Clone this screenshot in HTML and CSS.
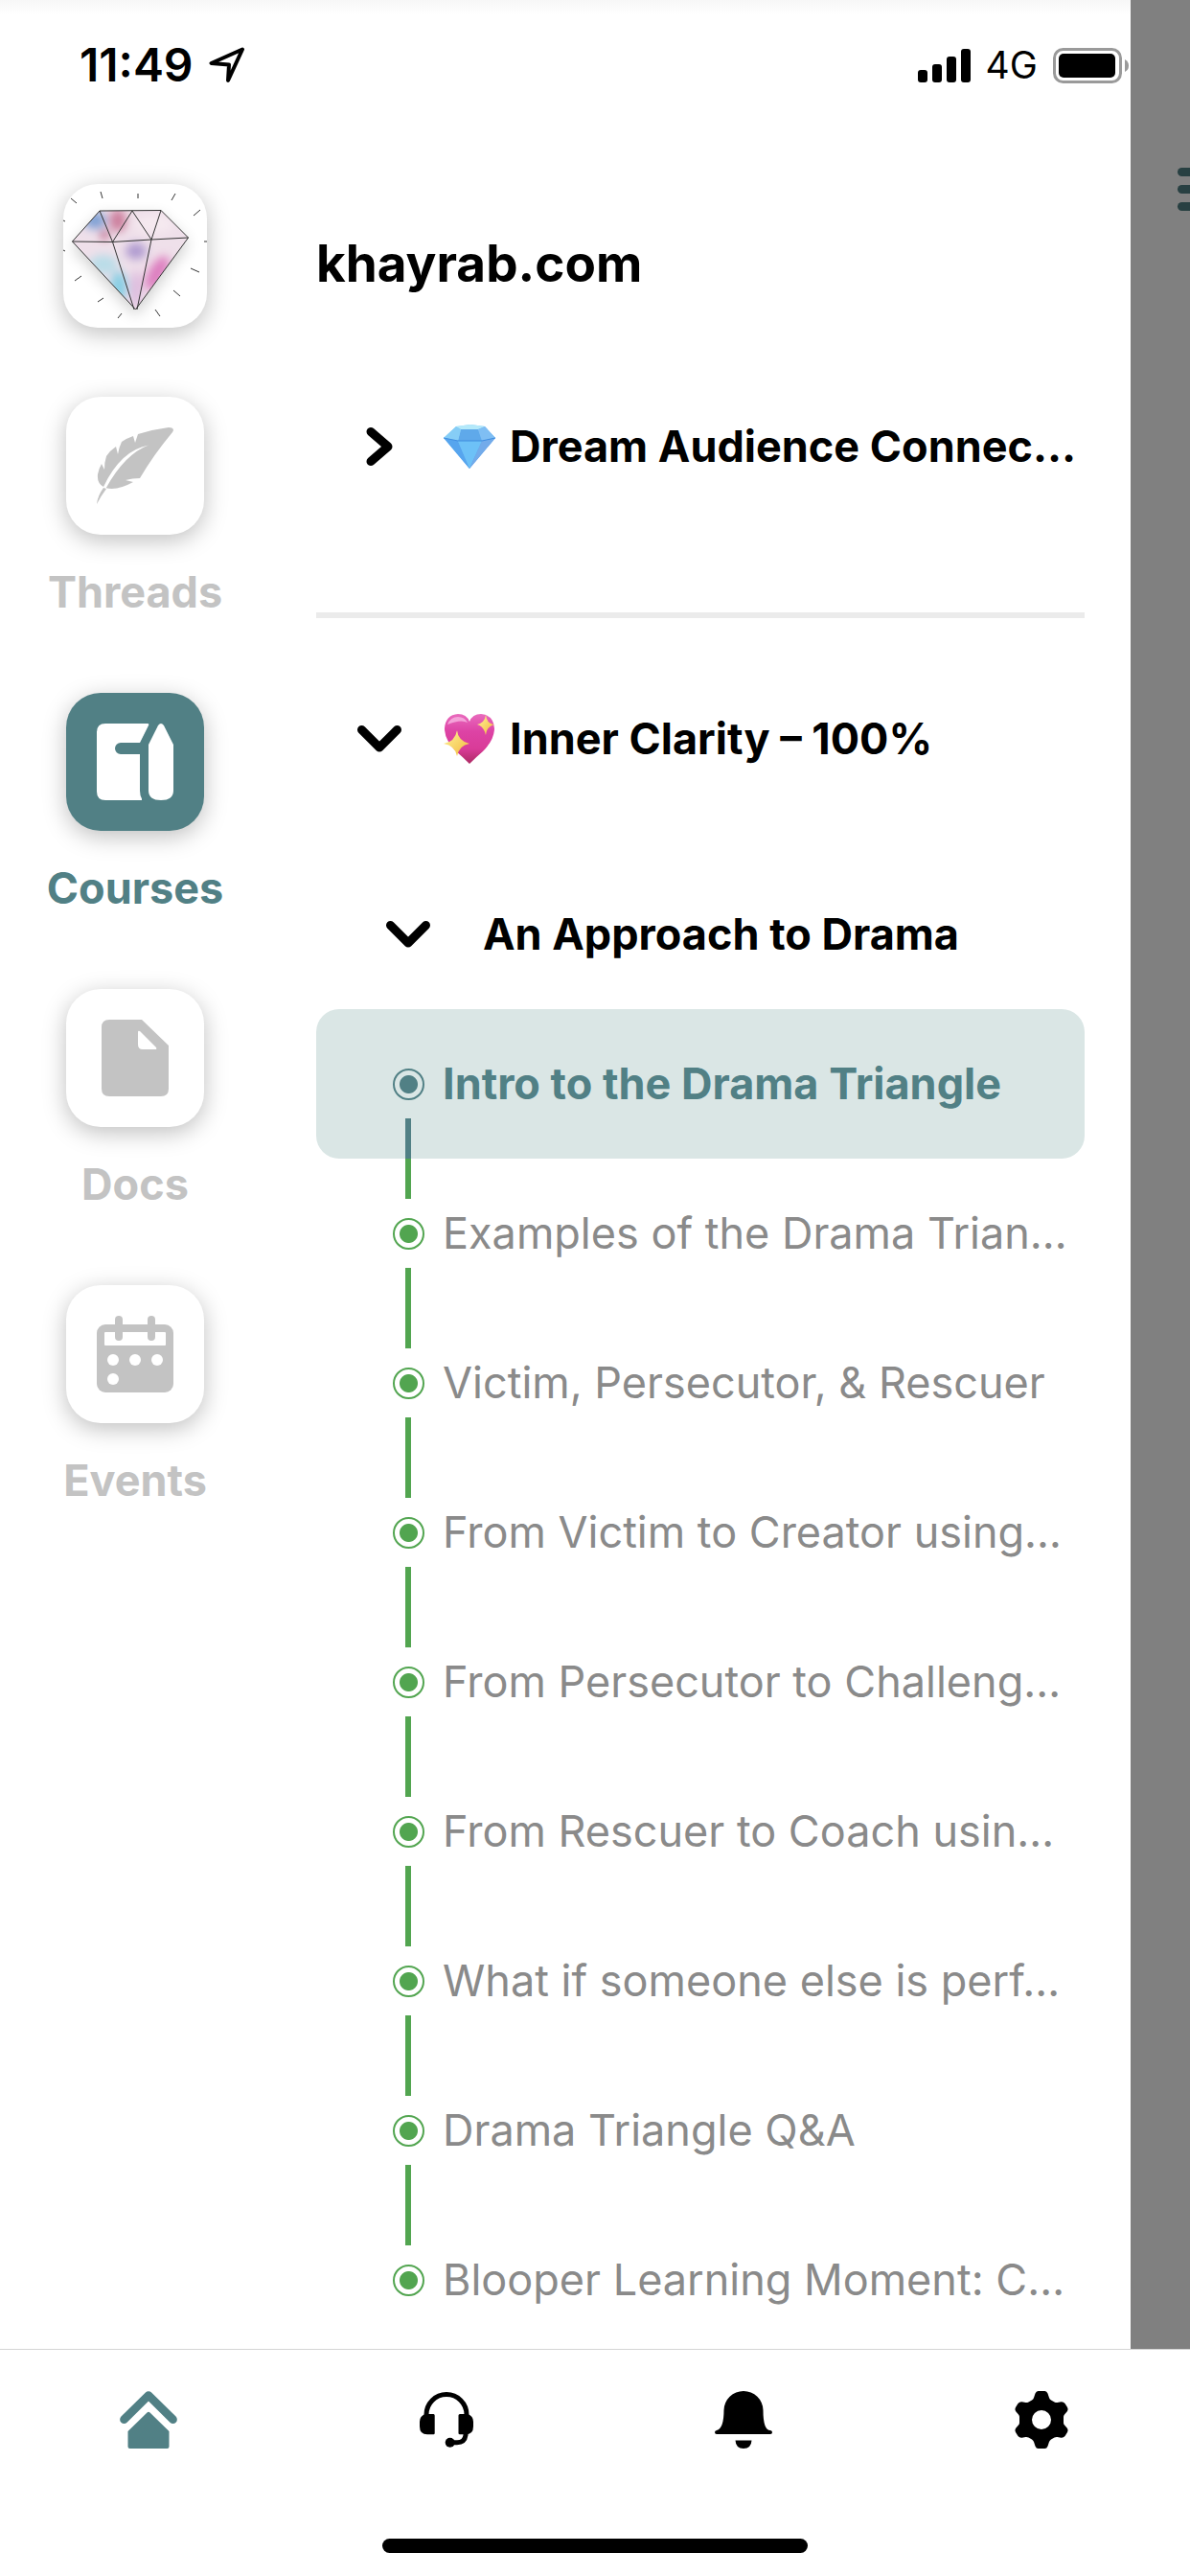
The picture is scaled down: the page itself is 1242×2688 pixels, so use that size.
FILE: index.html
```html
<!DOCTYPE html>
<html lang="en">
<head>
    <meta charset="UTF-8">
    <meta name="viewport" content="width=device-width, initial-scale=1.0">
    <title>khayrab.com</title>
    <link rel="stylesheet" href="styles.css">
</head>
<body>
    <div class="screen">
        <div class="drawer">
            <header class="status-bar">
                <div class="status-left">
                    <span class="time">11:49</span>
                    <svg width="38" height="38" viewBox="0 0 38 38" aria-hidden="true">
                        <path d="M35 2.500 2.500 17 21 18.500 20 35Z" fill="none" stroke="#000" stroke-width="4" stroke-linejoin="round"/>
                    </svg>
                </div>
                <div class="status-right">
                    <svg width="55" height="35" viewBox="0 0 55 35" aria-hidden="true">
                        <rect x="0" y="22" width="10" height="13" rx="3"/>
                        <rect x="15" y="16" width="10" height="19" rx="3"/>
                        <rect x="30" y="8" width="10" height="27" rx="3"/>
                        <rect x="45" y="0" width="10" height="35" rx="3"/>
                    </svg>
                    <span class="network">4G</span>
                    <svg width="79" height="37" viewBox="0 0 79 37" aria-hidden="true">
                        <rect x="1.500" y="1.500" width="69" height="34" rx="9" fill="none" stroke="#9a9a9a" stroke-width="3"/>
                        <rect x="6" y="6" width="59" height="25" rx="5"/>
                        <path d="M75 12Q79 14 79 18.500T75 25Z" fill="#9a9a9a"/>
                    </svg>
                </div>
            </header>

            <div class="panels">
                <nav class="sidebar" aria-label="Spaces">
                    <a class="logo" href="#" aria-label="khayrab.com">
                        <svg width="150" height="150" viewBox="0 0 150 150" aria-hidden="true">
                            <defs>
                                <clipPath id="gem"><path d="M38 28 102 27.500 130.500 56 75.500 131 9.500 60Z"/></clipPath>
                                <filter id="soft" x="-50%" y="-50%" width="200%" height="200%"><feGaussianBlur stdDeviation="5"/></filter>
                                <filter id="glow" x="-50%" y="-50%" width="200%" height="200%"><feGaussianBlur stdDeviation="8"/></filter>
                            </defs>
                            <path d="M38 34 102 34 130 62 76 137 10 66Z" fill="#000" opacity=".2" filter="url(#glow)"/>
                            <g clip-path="url(#gem)">
                                <rect width="150" height="150" fill="#efe0ea"/>
                                <g filter="url(#soft)">
                                    <ellipse cx="33" cy="38" rx="12" ry="9" fill="#7fa0d4"/>
                                    <ellipse cx="57" cy="38" rx="9" ry="12" fill="#cc7f9d"/>
                                    <ellipse cx="43" cy="53" rx="4" ry="5" fill="#b04a72"/>
                                    <ellipse cx="95" cy="42" rx="20" ry="9" fill="#f6eaf0"/>
                                    <ellipse cx="76" cy="70" rx="11" ry="9" fill="#b09bd0"/>
                                    <ellipse cx="42" cy="84" rx="15" ry="10" fill="#b9dde8"/>
                                    <ellipse cx="58" cy="107" rx="9" ry="16" fill="#88cfe4"/>
                                    <ellipse cx="76" cy="110" rx="5" ry="20" fill="#d9b5dc"/>
                                    <ellipse cx="98" cy="93" rx="9" ry="20" fill="#dd7fc0" transform="rotate(30 98 93)"/>
                                </g>
                            </g>
                            <path d="M38 28 102 27.500 130.500 56 75.500 131 9.500 60ZM9.500 60 51.500 60.500 92 58 130.500 56M38 28 51.500 60.500 72 28 92 58 102 27.500M51.500 60.500 74 131M92 58 77 131" fill="none" stroke="#333" stroke-width="1"/>
                            <path d="M8 15 14 20M39 8 41 15M78 10V15M117 10 113 17M143 27 136 33M147 60H150M133 88 142 92M115 111 122 117M96 131 101 138M61 135 57 140M42 119 36 123M19 96 12 101M0 69 2 70M0 38 2 39" stroke="#333" stroke-width="1"/>
                        </svg>
                    </a>

                    <a class="space" href="#">
                        <svg class="tile" viewBox="0 0 144 144" aria-hidden="true">
                            <path fill="currentColor" d="M107 32Q112 32 112 35L111 37Q91 61 77 85Q69 85 62 87L70 89Q54 98 41.700 95.300Q61 60 86 50.500Q57 56 39 94Q32 90 33 81Q34 75 37 70L40 76Q40 68 42 62Q46 56 52 52L54 60Q55 53 58 47Q64 43 70 41L72 48 75 39Q91 34 107 32ZM39 95 42 96Q36 104 32 112Q33 103 39 95Z"/>
                        </svg>
                        <span>Threads</span>
                    </a>
                    <a class="space active" href="#" aria-current="page">
                        <svg class="tile" viewBox="0 0 144 144" aria-hidden="true">
                            <path fill="currentColor" d="M41 32H85Q87 32 86 34L77 52H57A6 6 0 0 0 57 64H77V102Q77 107 79 110.500V112H41Q32 112 32 103V41Q32 32 41 32ZM96 34Q99 30 102 34L112 54V102Q112 112 99 112T86 102V54Z"/>
                        </svg>
                        <span>Courses</span>
                    </a>
                    <a class="space" href="#">
                        <svg class="tile" viewBox="0 0 144 144" aria-hidden="true">
                            <path fill="currentColor" fill-rule="evenodd" d="M45 32H79L107 59V104Q107 112 99 112H45Q37 112 37 104V40Q37 32 45 32ZM75 45V58Q75 63 80 63H93Q95 63 94 61L77 44Q75 43 75 45Z"/>
                        </svg>
                        <span>Docs</span>
                    </a>
                    <a class="space" href="#">
                        <svg class="tile" viewBox="0 0 144 144" aria-hidden="true">
                            <rect x="32" y="41" width="80" height="71" rx="9" fill="currentColor"/>
                            <rect x="40" y="49" width="64" height="14" rx="1" fill="#fff"/>
                            <rect x="51" y="32" width="8" height="26" rx="4" fill="currentColor"/>
                            <rect x="85" y="32" width="8" height="26" rx="4" fill="currentColor"/>
                            <g fill="#fff">
                                <circle cx="49" cy="78" r="6"/>
                                <circle cx="72" cy="78" r="6"/>
                                <circle cx="95" cy="78" r="6"/>
                                <circle cx="49" cy="98" r="6"/>
                            </g>
                        </svg>
                        <span>Events</span>
                    </a>
                </nav>

                <main class="content">
                    <h1>khayrab.com</h1>

                    <button class="course closed" type="button" aria-expanded="false">
                        <svg class="chevron" viewBox="0 0 48 48" aria-hidden="true"><path d="M15 8.500 33 24 15 39.500"/></svg>
                        <svg class="emoji" viewBox="0 0 54 54" role="img" aria-label="gem">
                            <defs>
                                <linearGradient id="blue" x2="1" y2="1"><stop stop-color="#a8e4fa"/><stop offset=".5" stop-color="#6bb8f5"/><stop offset="1" stop-color="#2f6fd6"/></linearGradient>
                            </defs>
                            <path d="M13 6 28 4 43 6 54 18 27 50 0 18Z" fill="url(#blue)"/>
                            <path d="M13 6 28 4 43 6 36 9 18 9Z" fill="#b4e9fa"/>
                            <path d="M18 9H36L40 21H15Z" fill="#5fa9ea"/>
                            <path d="M13 6 18 9 15 21 0 18Z" fill="#86cdf6"/>
                            <path d="M43 6 54 18 40 21 36 9Z" fill="#7fbef3"/>
                            <path d="M0 18 15 21 27 50Z" fill="#57a5ee"/>
                            <path d="M15 21H40L27 50Z" fill="#6dc1f7"/>
                            <path d="M40 21 54 18 27 50Z" fill="#73abea"/>
                            <path d="M0 18 15 21H40L54 18" fill="none" stroke="#3f8de0" stroke-width="1"/>
                        </svg>
                        <span>Dream Audience Connec…</span>
                    </button>

                    <hr>

                    <button class="course" type="button" aria-expanded="true">
                        <svg class="chevron" viewBox="0 0 48 48" aria-hidden="true"><path d="M5.500 14.500 24 33 42.500 14.500"/></svg>
                        <svg class="emoji" viewBox="0 0 54 54" role="img" aria-label="sparkling heart">
                            <defs>
                                <linearGradient id="pink" x2="0" y2="1"><stop stop-color="#e96bbd"/><stop offset=".35" stop-color="#dd43a5"/><stop offset=".7" stop-color="#d93b98"/><stop offset="1" stop-color="#ad2a63"/></linearGradient>
                                <linearGradient id="gold" x2="1" y2="1"><stop stop-color="#fff49a"/><stop offset="1" stop-color="#f2b83c"/></linearGradient>
                            </defs>
                            <path d="M27 53Q20 46 13 40Q1 28 1 16Q2 2 15 1Q24 1 27 9Q30 1 39 1Q52 2 53 16Q53 28 41 40Q34 46 27 53Z" fill="url(#pink)"/>
                            <path d="M4 12Q7 4 15 4Q22 4 25 10Q18 6 4 12Z" fill="#f4a3d9"/>
                            <path d="M14 18Q15 29 27 32Q16 34 14 45Q12 34 0 32Q12 30 14 18Z" fill="url(#gold)"/>
                            <path d="M44 2Q45 11 53 12Q45 14 44 23Q42 14 35 12Q43 10 44 2Z" fill="url(#gold)"/>
                        </svg>
                        <span>Inner Clarity – 100%</span>
                    </button>

                    <button class="module" type="button" aria-expanded="true">
                        <svg class="chevron" viewBox="0 0 48 48" aria-hidden="true"><path d="M5.500 14.500 24 33 42.500 14.500"/></svg>
                        <span>An Approach to Drama</span>
                    </button>

                    <ol class="lessons">
                        <li><a class="lesson current" href="#" aria-current="true"><i class="track"><b></b></i><span>Intro to the Drama Triangle</span></a></li>
                        <li><a class="lesson" href="#"><i class="track"><b></b></i><span>Examples of the Drama Trian…</span></a></li>
                        <li><a class="lesson" href="#"><i class="track"><b></b></i><span>Victim, Persecutor, &amp; Rescuer</span></a></li>
                        <li><a class="lesson" href="#"><i class="track"><b></b></i><span>From Victim to Creator using…</span></a></li>
                        <li><a class="lesson" href="#"><i class="track"><b></b></i><span>From Persecutor to Challeng…</span></a></li>
                        <li><a class="lesson" href="#"><i class="track"><b></b></i><span>From Rescuer to Coach usin…</span></a></li>
                        <li><a class="lesson" href="#"><i class="track"><b></b></i><span>What if someone else is perf…</span></a></li>
                        <li><a class="lesson" href="#"><i class="track"><b></b></i><span>Drama Triangle Q&amp;A</span></a></li>
                        <li><a class="lesson" href="#"><i class="track"><b></b></i><span>Blooper Learning Moment: C…</span></a></li>
                    </ol>
                </main>
            </div>
        </div>

        <div class="backdrop">
            <button class="menu-button" type="button" aria-label="Menu"><i></i><i></i><i></i></button>
        </div>
    </div>

    <footer class="bottom-bar">
        <nav class="tabs" aria-label="Main">
            <a class="tab active" href="#" aria-label="Home">
                <svg width="60" height="60" viewBox="0 0 60 60" aria-hidden="true">
                    <path d="M4.500 29.700 30 4.500 55.500 29.700" fill="none" stroke="currentColor" stroke-width="8.700" stroke-linecap="round" stroke-linejoin="round"/>
                    <path fill="currentColor" d="M28.500 22.500Q30 21 31.500 22.500L51.500 42V58Q51.500 60 49.500 60H10.500Q8.500 60 8.500 58V42Z"/>
                </svg>
            </a>
            <a class="tab" href="#" aria-label="Support">
                <svg width="60" height="60" viewBox="0 0 60 60" aria-hidden="true">
                    <path d="M9 26V24.500A21 21 0 0 1 51 24.500V26M50 44V46Q49 53.700 41 53.700H34" fill="none" stroke="currentColor" stroke-width="5"/>
                    <path fill="currentColor" d="M8 24H16.500Q17.700 24 17.700 25.500V44Q17.700 45.300 16.500 45.300H10Q2 45.300 2 37V32Q2 26 8 24ZM52 24H44Q42.500 24 42.500 25.500V44Q42.500 45.300 44 45.300H50Q58 45.300 58 37V32Q58 26 52 24Z"/>
                    <circle cx="33.700" cy="53.700" r="5" fill="currentColor"/>
                </svg>
            </a>
            <a class="tab" href="#" aria-label="Notifications">
                <svg width="60" height="60" viewBox="0 0 60 60" aria-hidden="true">
                    <path fill="currentColor" d="M30 0A20.500 20.500 0 0 1 50.500 20Q50.500 41 58 41Q60 41.500 60 43Q60 45 58 45H2Q0 45 0 43Q0 41.500 2 41Q9.500 39 9.500 20A20.500 20.500 0 0 1 30 0ZM21.500 51.500H38.500Q38 60 30 60T21.500 51.500Z"/>
                </svg>
            </a>
            <a class="tab" href="#" aria-label="Settings">
                <svg width="60" height="60" viewBox="0 0 60 60" aria-hidden="true">
                    <path fill="currentColor" fill-rule="evenodd" d="M26.500 0H33.500Q35.500 0 36.500 2.500L38 7Q38.500 8.500 40 9.500L43.500 11.500Q45 12.200 46.500 12L50.500 11.200Q53 11 54.500 13L57 17Q58.200 19 57 21L54 24.500Q53 25.500 53 27V33Q53 34.500 54 35.500L57 39Q58.200 41 57 43L54.500 47Q53 49 50.500 48.800L46.500 48Q45 47.800 43.500 48.500L40 50.500Q38.500 51.500 38 53L36.500 57.500Q35.500 60 33.500 60H26.500Q24.500 60 23.500 57.500L22 53Q21.500 51.500 20 50.500L16.500 48.500Q15 47.800 13.500 48L9.500 48.800Q7 49 5.500 47L3 43Q1.800 41 3 39L6 35.500Q7 34.500 7 33V27Q7 25.500 6 24.500L3 21Q1.800 19 3 17L5.500 13Q7 11 9.500 11.200L13.500 12Q15 12.200 16.500 11.500L20 9.500Q21.500 8.500 22 7L23.500 2.500Q24.500 0 26.500 0ZM30 20A10 10 0 1 0 30 40A10 10 0 1 0 30 20Z"/>
                </svg>
            </a>
        </nav>
        <div class="home-indicator"></div>
    </footer>
</body>
</html>
```
FILE: styles.css
```css
* {
    box-sizing: border-box;
}

body {
    margin: 0;
    background-color: #fff;
    color: #000;
    font-family: Inter, "Liberation Sans", sans-serif;
    font-size: 45px;
    line-height: 60px;
}

a {
    color: inherit;
    text-decoration: none;
}

button {
    border: none;
    padding: 0;
    background: none;
    color: inherit;
    font: inherit;
    text-align: left;
    cursor: pointer;
}

svg {
    display: block;
    flex-shrink: 0;
}

.screen {
    display: flex;
    min-height: 100vh;
}

.drawer {
    width: 95%;
    background: linear-gradient(#f7f7f7, #fff 15px);
}

.backdrop {
    flex: 1;
    padding-top: 175px;
    padding-left: 49px;
    background-color: #808080;
    overflow: hidden;
}

.menu-button {
    display: grid;
    gap: 9px;
}

.menu-button i {
    width: 54px;
    height: 9px;
    border-radius: 5px;
    background-color: #284042;
}

/* status bar */

.status-bar {
    display: flex;
    justify-content: space-between;
    align-items: center;
    height: 192px;
    padding: 0 2px 56px 83px;
}

.status-left,
.status-right {
    display: flex;
    align-items: center;
    gap: 16px;
}

.time {
    font-size: 48px;
    font-weight: 600;
}

.network {
    font-size: 39px;
}

/* sidebar */

.panels {
    display: flex;
}

.sidebar {
    display: flex;
    flex-direction: column;
    align-items: center;
    gap: 75px;
    width: 282px;
    flex-shrink: 0;
}

.logo {
    margin-bottom: -3px;
    border-radius: 36px;
    background-color: #fff;
    box-shadow: 0 6px 24px rgba(0, 0, 0, 0.25);
}

.logo svg {
    border-radius: 36px;
}

.space {
    display: flex;
    flex-direction: column;
    align-items: center;
    gap: 30px;
    color: #c3c3c3;
    font-weight: 700;
}

.tile {
    width: 144px;
    height: 144px;
    border-radius: 36px;
    background-color: #fff;
    box-shadow: 0 6px 24px rgba(0, 0, 0, 0.25);
}

.space.active {
    color: #518085;
}

.space.active .tile {
    background-color: #518085;
    color: #fff;
}

/* course outline */

.content {
    flex: 1;
    min-width: 0;
    padding: 18px 48px 200px;
}

h1 {
    margin: 0;
    font-size: 53px;
    line-height: 130px;
}

.course,
.module {
    display: flex;
    align-items: center;
    width: 100%;
    font-weight: 700;
    white-space: nowrap;
}

.course {
    height: 252px;
    padding-left: 42px;
}

.course.closed {
    margin-bottom: 47px;
}

.module {
    gap: 54px;
    height: 156px;
    padding-left: 72px;
}

.chevron {
    width: 48px;
    height: 48px;
    fill: none;
    stroke: #000;
    stroke-width: 9px;
    stroke-linecap: round;
    stroke-linejoin: round;
}

.emoji {
    width: 54px;
    height: 54px;
    margin: 0 15px 0 43px;
}

hr {
    height: 6px;
    margin: 0;
    border: none;
    background-color: #ebebeb;
}

.lessons {
    margin: 0;
    padding: 0;
    list-style: none;
}

.lesson {
    display: flex;
    align-items: center;
    gap: 18px;
    height: 156px;
    padding-left: 78px;
    border-radius: 24px;
    color: #8a8a8a;
    white-space: nowrap;
}

.lesson.current {
    background-color: #dae6e5;
    color: #518085;
    font-weight: 700;
}

/* dot with a piece of line above and below it */
.track {
    display: flex;
    flex-direction: column;
    justify-content: space-between;
    align-items: center;
    width: 36px;
    height: 100%;
    color: #52a550;
}

.track::before,
.track::after {
    content: "";
    width: 6px;
    height: 42px;
    background-color: currentColor;
}

.track b {
    width: 33px;
    height: 33px;
    border: 2px solid currentColor;
    border-radius: 50%;
    background: radial-gradient(circle, currentColor 9px, transparent 10px);
}

.current .track {
    color: #518085;
}

li:first-child .track::before,
li:last-child .track::after {
    visibility: hidden;
}

/* bottom bar */

.bottom-bar {
    position: fixed;
    right: 0;
    bottom: 0;
    left: 0;
    padding-bottom: 24px;
    border-top: 1px solid #d4d4d4;
    background-color: #fff;
}

.tabs {
    display: grid;
    grid-template-columns: repeat(4, 1fr);
    padding: 43px 0 94px;
}

.tab {
    display: flex;
    justify-content: center;
}

.tab.active {
    color: #518085;
}

.home-indicator {
    width: 444px;
    height: 15px;
    margin: 0 auto;
    border-radius: 8px;
    background-color: #000;
}
```
